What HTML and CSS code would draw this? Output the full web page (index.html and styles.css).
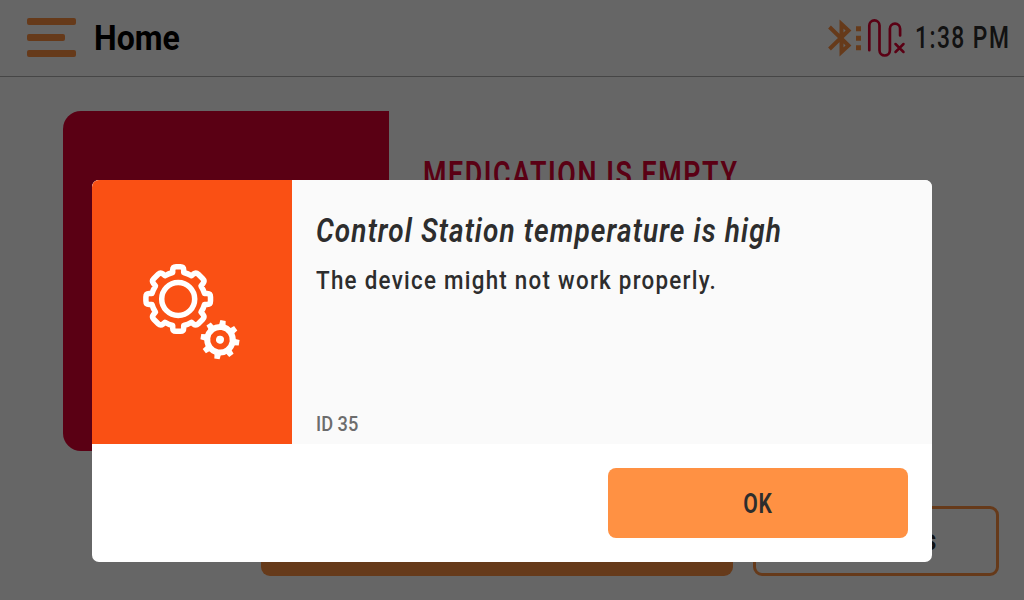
FILE: index.html
```html
<!DOCTYPE html>
<html lang="en">
<head>
<meta charset="utf-8">
<title>Home</title>
<link rel="stylesheet" href="styles.css">
</head>
<body>
<div class="screen">
  <header class="topbar">
    <div class="menu"><span class="bar"></span><span class="bar bar-short"></span><span class="bar"></span></div>
    <h1 class="title"><span class="fit">Home</span></h1>
    <div class="status">
      <svg class="status-icons" width="78" height="40" viewBox="0 0 78 40" fill="none">
        <path d="M1.500 9L20.500 27.500L13.500 34V6L20.500 12.500L1.500 31" stroke="#ff9143" stroke-width="4"/>
        <path d="M28 8.300h5v5h-5zM28 17.700h5v5h-5zM28 27.200h5v5h-5z" fill="#ff9143"/>
        <path d="M41.300 32.200V7.500a5.100 5.100 0 0 1 10.200 0V32.300a5.200 5.200 0 0 0 10.400 0V10.800a5.100 5.100 0 0 1 10.200 0V17.500" stroke="#e10032" stroke-width="2.700" stroke-linecap="round"/>
        <path d="M67.500 26l8 8M75.500 26l-8 8" stroke="#e10032" stroke-width="2.500" stroke-linecap="round"/>
      </svg>
      <div class="clock"><span class="fit">1:38 PM</span></div>
    </div>
  </header>
  <main class="content">
    <div class="card">
      <div class="card-media"></div>
      <h2 class="card-title"><span class="fit">MEDICATION IS EMPTY</span></h2>
    </div>
    <div class="actions">
      <div class="action action-main"></div>
      <div class="action action-side"><span class="fit">s</span></div>
    </div>
  </main>
</div>
<div class="overlay">
  <section class="dialog">
    <div class="dialog-main">
      <div class="dialog-icon">
        <svg width="100" height="100" viewBox="0 0 100 100" fill="none">
          <g stroke="#fff" stroke-width="5.500">
            <circle cx="36.200" cy="37" r="16.500"/>
            <path stroke-linejoin="round" d="M30.700 10.500V8Q30.700 4.700 34 4.700H38.500Q41.700 4.700 41.700 8V10.500Q46 11.500 49.500 13.800L51.500 12Q54 10 56.300 12.300L60.800 16.800Q63 19 61 21.500L59 24Q61.500 28 62.500 31.500H65.200Q68.500 31.500 68.500 35V39Q68.500 42.500 65.200 42.500H62.500Q61.500 46.500 59 50L61 52.500Q63 55 60.800 57.200L56.300 61.700Q54 64 51.500 62L49.500 60.200Q46 62.500 41.700 63.500V66Q41.700 69.300 38.500 69.300H34Q30.700 69.300 30.700 66V63.500Q26.500 62.500 23 60.200L21 62Q18.500 64 16.200 61.700L11.700 57.200Q9.500 55 11.500 52.500L13.500 50Q11 46.500 10 42.500H7.200Q3.900 42.500 3.900 39V35Q3.900 31.500 7.200 31.500H10Q11 28 13.500 24L11.500 21.500Q9.500 19 11.700 16.800L16.200 12.300Q18.500 10 21 12L23 13.800Q26.500 11.500 30.700 10.500Z"/>
          </g>
          <g transform="translate(78 77.700) rotate(9)">
            <circle r="12.800" stroke="#fff" stroke-width="6"/>
            <circle r="4" fill="#fff"/>
            <g fill="#fff">
              <path id="tooth" d="M-3.300 -14L-2.700 -19.400H2.700L3.300 -14Z"/>
              <use href="#tooth" transform="rotate(45)"/><use href="#tooth" transform="rotate(90)"/><use href="#tooth" transform="rotate(135)"/><use href="#tooth" transform="rotate(180)"/><use href="#tooth" transform="rotate(225)"/><use href="#tooth" transform="rotate(270)"/><use href="#tooth" transform="rotate(315)"/>
            </g>
          </g>
        </svg>
      </div>
      <div class="dialog-text">
        <h2 class="dialog-title"><span class="fit">Control Station temperature is high</span></h2>
        <p class="dialog-body"><span class="fit">The device might not work properly.</span></p>
        <p class="dialog-id"><span class="fit">ID 35</span></p>
      </div>
    </div>
    <footer class="dialog-footer"><button class="ok"><span class="fit">OK</span></button></footer>
  </section>
</div>
</body>
</html>
```
FILE: styles.css
```css
* { box-sizing: border-box; margin: 0; padding: 0; }
body { width: 1024px; height: 600px; overflow: hidden; background: #fff; color: #2d2d2d; font-family: Roboto, "Liberation Sans", sans-serif; }
.fit { display: inline-block; white-space: nowrap; transform-origin: left center; }
.screen { width: 1024px; height: 600px; display: flex; flex-direction: column; }
.topbar { height: 77px; border-bottom: 1px solid #b0b0b0; display: flex; padding-left: 27px; flex: none; }
.menu { width: 49px; padding-top: 18px; display: flex; flex-direction: column; gap: 9px; }
.bar { height: 7px; border-radius: 2px; background: #ff9143; }
.bar-short { width: 38px; }
.title { margin-left: 18px; padding-top: 17px; font-size: 34.500px; line-height: 42px; color: #000; font-weight: 700; }
.title .fit { transform: scaleX(.93); }
.status { margin-left: auto; width: 196px; display: flex; padding-top: 18px; }
.status-icons { flex: none; }
.clock { margin-left: 9px; font-size: 31px; line-height: 40px; font-weight: 500; letter-spacing: 2px; }
.clock .fit { transform: scaleX(.735); }
.content { flex: 1; padding: 34px 25px 24px 63px; display: flex; flex-direction: column; justify-content: space-between; }
.card { display: flex; height: 340px; }
.card-media { width: 326px; background: #e10032; border-radius: 18px 0 0 18px; }
.card-title { margin-left: 34px; padding-top: 42px; font-size: 34.500px; line-height: 42px; font-weight: 600; letter-spacing: 2px; color: #e10032; }
.card-title .fit { transform: scaleX(.778); }
.actions { display: flex; justify-content: flex-end; gap: 20px; }
.action { height: 70px; border-radius: 9px; }
.action-main { width: 472px; background: #ff9143; }
.action-side { width: 246px; border: 3px solid #ff9143; display: flex; justify-content: flex-end; padding-right: 58px; font-size: 29px; line-height: 62px; font-weight: 600; }
.action-side .fit { transform: scaleX(.9); }
.overlay { position: absolute; inset: 0; background: rgba(0, 0, 0, .6); padding: 180px 92px 38px; }
.dialog { height: 382px; background: #fff; border-radius: 7px; overflow: hidden; }
.dialog-main { height: 264px; background: #fafafa; display: flex; }
.dialog-icon { width: 200px; background: #fa5014; padding: 82px 0 0 50px; }
.dialog-text { flex: 1; padding: 31px 24px 8px; display: flex; flex-direction: column; }
.dialog-title { font-size: 32.500px; line-height: 41px; font-weight: 600; font-style: italic; letter-spacing: 1.300px; }
.dialog-title .fit { transform: scaleX(.861); }
.dialog-body { margin-top: 9px; font-size: 26.500px; line-height: 38px; font-weight: 500; letter-spacing: 1.500px; }
.dialog-body .fit { transform: scaleX(.844); }
.dialog-id { margin-top: auto; font-size: 20px; line-height: 24px; font-weight: 500; color: #6c6c6c; }
.dialog-id .fit { transform: scaleX(.91); }
.dialog-footer { padding: 24px; display: flex; justify-content: flex-end; }
.ok { width: 300px; height: 70px; padding-top: 1px; border: 0; border-radius: 8px; background: #ff9143; color: #2d2d2d; font-family: inherit; font-size: 27px; font-weight: 600; letter-spacing: 1px; }
.ok .fit { transform: scaleX(.78); transform-origin: center; }
```
